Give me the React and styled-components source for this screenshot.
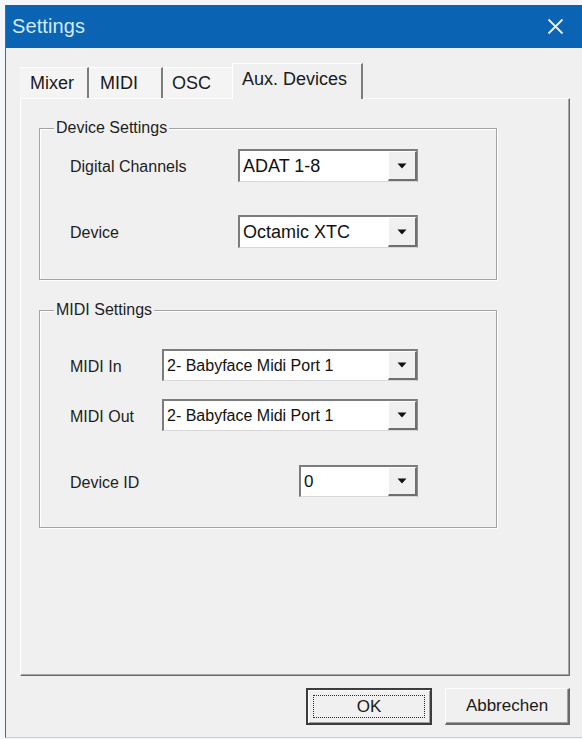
import React from "react";
import styled, { createGlobalStyle } from "styled-components";

const Global = createGlobalStyle`
  html, body {
    margin: 0;
    padding: 0;
    background: #f5f8fb;
    font-family: "Liberation Sans", Arial, sans-serif;
    color: #1c1c1c;
  }
  * { box-sizing: border-box; }
`;

const Page = styled.div`
  width: 582px;
  height: 739px;
  padding: 5px 0 0 5px;
  overflow: hidden;
`;

const Window = styled.div`
  width: 577px;
  height: 733px;
  display: flex;
  flex-direction: column;
  border-left: 1px solid #3a6ea6;
  border-bottom: 1px solid #b9cfe4;
  background: #f0f0f0;
`;

const TitleBar = styled.div`
  height: 43px;
  flex: none;
  background: #0a63b3;
  display: flex;
  align-items: center;
  justify-content: space-between;
  padding: 0 18px 0 6px;
`;

const Title = styled.span`
  font-size: 20px;
  color: #d3e9fd;
  letter-spacing: 0.1px;
`;

const Body = styled.div`
  flex: 1;
  display: flex;
  flex-direction: column;
  padding: 15px 12px 0 14px;
`;

const TabStrip = styled.div`
  display: flex;
  align-items: flex-end;
  height: 35px;
  position: relative;
  z-index: 1;
`;

const Tab = styled.div`
  width: ${(p) => p.$w}px;
  height: ${(p) => (p.$active ? 36 : 31)}px;
  margin-bottom: ${(p) => (p.$active ? -1 : 0)}px;
  margin-left: ${(p) => (p.$active ? -2 : 0)}px;
  padding-left: ${(p) => p.$pad}px;
  padding-top: 4px;
  font-size: 18px;
  line-height: 22px;
  color: #1a1a1a;
  background: ${(p) => (p.$active ? "#f0f0f0" : "#f4f4f4")};
  border-top: 1px solid #ffffff;
  border-left: 1px solid ${(p) => (p.$active ? "#ffffff" : "#f8f8f8")};
  border-right: 2px solid ${(p) => (p.$hideEdge ? "transparent" : "#7d7d7d")};
  position: relative;
  z-index: ${(p) => (p.$active ? 2 : 1)};
`;

const Panel = styled.div`
  width: 550px;
  height: 578px;
  flex: none;
  border-top: 1px solid #ffffff;
  border-left: 1px solid #ffffff;
  border-right: 1px solid #6a6a6a;
  border-bottom: 1px solid #6a6a6a;
  box-shadow: inset -1px -1px 0 #a6a6a6;
  padding: 29px 0 0 18px;
  display: flex;
  flex-direction: column;
`;

const Group = styled.section`
  width: 458px;
  margin-top: ${(p) => p.$mt || 0}px;
  border: 1px solid #a3a3a3;
  box-shadow: inset 1px 1px 0 #ffffff, 1px 1px 0 #ffffff;
  display: flex;
  flex-direction: column;
`;

const Caption = styled.div`
  margin: -10px 0 0 14px;
  padding: 0 2px;
  width: fit-content;
  font-size: 16px;
  line-height: 18px;
  background: #f0f0f0;
  color: #1e1e1e;
`;

const Rows = styled.div`
  display: flex;
  flex-direction: column;
  padding: ${(p) => p.$pt}px 0 ${(p) => p.$pb}px 30px;
`;

const Row = styled.div`
  width: 348px;
  display: flex;
  align-items: center;
  justify-content: space-between;
  margin-top: ${(p) => p.$mt || 0}px;
`;

const Label = styled.span`
  font-size: 16px;
  padding-top: 3px;
  color: #1e1e1e;
`;

const Combo = styled.div`
  width: ${(p) => p.$w}px;
  height: ${(p) => p.$h}px;
  display: flex;
  background: #ffffff;
  border-top: 2px solid #7c7c7c;
  border-left: 2px solid #7c7c7c;
  border-right: 1px solid #8e8e8e;
  border-bottom: 1px solid #d8d8d8;
`;

const Value = styled.span`
  flex: 1;
  display: flex;
  align-items: center;
  padding-left: 3px;
  font-size: ${(p) => p.$fs}px;
  color: #111;
  white-space: nowrap;
  overflow: hidden;
`;

const DropButton = styled.span`
  width: 29px;
  flex: none;
  display: flex;
  align-items: center;
  justify-content: center;
  background: #f0f0f0;
  border-top: 1px solid #ffffff;
  border-left: 1px solid #ffffff;
  border-right: 2px solid #6f6f6f;
  border-bottom: 2px solid #6f6f6f;
`;

const ButtonRow = styled.div`
  display: flex;
  justify-content: flex-end;
  gap: 13px;
  margin-top: 12px;
`;

const Button = styled.button`
  width: ${(p) => p.$w}px;
  height: 37px;
  padding: 0;
  font-family: inherit;
  font-size: 17px;
  color: #1a1a1a;
  background: #f0f0f0;
  border-style: solid;
  border-width: ${(p) => (p.$default ? "2px" : "1px 2px 2px 1px")};
  border-color: ${(p) =>
    p.$default ? "#3c3c3c" : "#ffffff #6a6a6a #6a6a6a #ffffff"};
  box-shadow: ${(p) =>
    p.$default
      ? "inset 1px 1px 0 #ffffff, inset -1px -1px 0 #a0a0a0"
      : "inset -1px -1px 0 #a0a0a0"};
  display: flex;
  align-items: center;
  justify-content: center;
  cursor: default;
`;

const Focus = styled.span`
  width: calc(100% - 10px);
  height: calc(100% - 10px);
  border: 1px dotted #2a2a2a;
  display: flex;
  align-items: center;
  justify-content: center;
`;

const CloseIcon = () => (
  <svg width="17" height="17" viewBox="0 0 17 17" aria-hidden="true">
    <path d="M1.5 1.5 L15.5 15.5 M15.5 1.5 L1.5 15.5" stroke="#e4f1fd" strokeWidth="1.8" fill="none" />
  </svg>
);

const Arrow = () => (
  <svg width="10" height="6" viewBox="0 0 10 6" aria-hidden="true">
    <path d="M0.5 0.5 H9.5 L5 5.5 Z" fill="#111" />
  </svg>
);

const Select = ({ w, h, fs, value }) => (
  <Combo $w={w} $h={h}>
    <Value $fs={fs}>{value}</Value>
    <DropButton>
      <Arrow />
    </DropButton>
  </Combo>
);

const tabs = [
  { label: "Mixer", w: 69, pad: 9 },
  { label: "MIDI", w: 74, pad: 10 },
  { label: "OSC", w: 71, pad: 8, hideEdge: true },
  { label: "Aux. Devices", w: 131, pad: 9, active: true },
];

export default function App() {
  return (
    <>
      <Global />
      <Page>
        <Window>
          <TitleBar>
            <Title>Settings</Title>
            <CloseIcon />
          </TitleBar>
          <Body>
            <TabStrip>
              {tabs.map((t) => (
                <Tab
                  key={t.label}
                  $w={t.w}
                  $pad={t.pad}
                  $active={t.active}
                  $hideEdge={t.hideEdge}
                >
                  {t.label}
                </Tab>
              ))}
            </TabStrip>
            <Panel>
              <Group>
                <Caption>Device Settings</Caption>
                <Rows $pt={12} $pb={31}>
                  <Row>
                    <Label>Digital Channels</Label>
                    <Select w={180} h={33} fs={18} value="ADAT 1-8" />
                  </Row>
                  <Row $mt={33}>
                    <Label>Device</Label>
                    <Select w={180} h={33} fs={18} value="Octamic XTC" />
                  </Row>
                </Rows>
              </Group>
              <Group $mt={30}>
                <Caption>MIDI Settings</Caption>
                <Rows $pt={30} $pb={30}>
                  <Row>
                    <Label>MIDI In</Label>
                    <Select w={256} h={32} fs={16} value="2- Babyface Midi Port 1" />
                  </Row>
                  <Row $mt={18}>
                    <Label>MIDI Out</Label>
                    <Select w={256} h={32} fs={16} value="2- Babyface Midi Port 1" />
                  </Row>
                  <Row $mt={34}>
                    <Label>Device ID</Label>
                    <Select w={119} h={32} fs={17} value="0" />
                  </Row>
                </Rows>
              </Group>
            </Panel>
            <ButtonRow>
              <Button $w={126} $default>
                <Focus>OK</Focus>
              </Button>
              <Button $w={125}>Abbrechen</Button>
            </ButtonRow>
          </Body>
        </Window>
      </Page>
    </>
  );
}
